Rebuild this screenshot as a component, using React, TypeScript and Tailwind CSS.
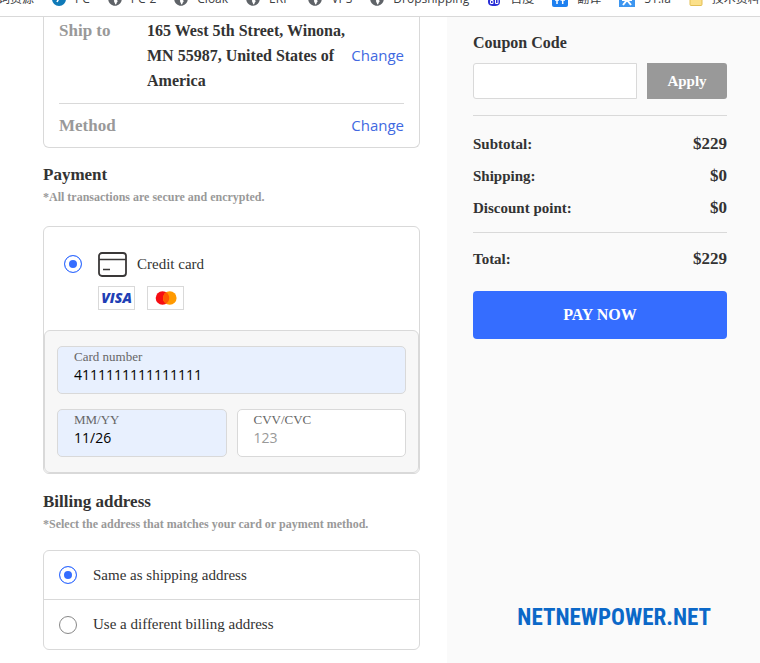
import { useState, type ReactNode } from "react";
import { FaGlobeAmericas } from "react-icons/fa";

const globe = <FaGlobeAmericas className="size-3.5 text-[#5f6368]" />;

const bookmarks: { label: string; icon: ReactNode }[] = [
  {
    label: "PC",
    icon: (
      <svg viewBox="0 0 14 14" className="size-3.5">
        <circle cx="7" cy="7" r="7" fill="#0f7ab8" />
        <path d="M5 10 8.500 3.500" stroke="#fff" strokeWidth="1.500" />
      </svg>
    ),
  },
  { label: "PC-2", icon: globe },
  { label: "Cloak", icon: globe },
  { label: "ERP", icon: globe },
  { label: "VPS", icon: globe },
  { label: "Dropshipping", icon: globe },
  {
    label: "百度",
    icon: (
      <svg viewBox="0 0 14 14" className="size-3.5">
        <path d="M7 3c4 0 6 3 6 6.500S11 14 7 14s-6-1-6-4.500S3 3 7 3z" fill="#2a2fd6" />
        <path d="M3.500 8.500h2.500v3H3.500zM8.500 8v3.500H11V8" stroke="#fff" fill="none" />
      </svg>
    ),
  },
  {
    label: "翻译",
    icon: (
      <svg viewBox="0 0 16 16" className="size-4">
        <rect width="16" height="16" rx="2" fill="#1e80f0" />
        <path d="M3 9h4M5 6v7M8.500 9H13M10.700 6v7" stroke="#fff" strokeWidth="1.500" />
      </svg>
    ),
  },
  {
    label: "51.la",
    icon: (
      <svg viewBox="0 0 16 16" className="size-4">
        <rect width="16" height="16" fill="#3d96f0" />
        <path d="M8 4v5l-4 5M8 9l4 5M3 9h10" stroke="#fff" strokeWidth="2" fill="none" />
      </svg>
    ),
  },
  {
    label: "技术资料",
    icon: (
      <svg viewBox="0 0 14 14" className="size-3.5">
        <rect x="1" y="1" width="12" height="12.500" rx="1" fill="#fbe08a" stroke="#e3bf55" />
      </svg>
    ),
  },
];

function BookmarkBar() {
  return (
    <nav className="flex h-[17px] items-end gap-[18px] overflow-hidden border-b border-[#d9d9d9] bg-white pb-[9px] font-['Open_Sans','Noto_Sans_CJK_SC',sans-serif] text-xs leading-4 text-[#3c4043]">
      <span className="-ml-0.5 shrink-0">词资源</span>
      {bookmarks.map((b) => (
        <a key={b.label} href="#" className="flex shrink-0 items-center gap-[9px] whitespace-nowrap">
          {b.icon}
          {b.label}
        </a>
      ))}
    </nav>
  );
}

type RadioProps = {
  id: string;
  name: string;
  checked: boolean;
  onChange: () => void;
};

function Radio(props: RadioProps) {
  return (
    <input
      type="radio"
      {...props}
      className="size-[18px] shrink-0 appearance-none rounded-full border border-[#888] bg-white checked:border-[#356dff] checked:bg-[#356dff] checked:shadow-[inset_0_0_0_4px_#fff]"
    />
  );
}

type FieldProps = {
  id: string;
  label: string;
  value: string;
  placeholder?: string;
  onChange: (value: string) => void;
};

function Field({ id, label, value, placeholder, onChange }: FieldProps) {
  return (
    <div
      className={`h-12 min-w-0 rounded-[5px] border border-[#d9d9d9] px-4 pt-0.5 ${value ? "bg-[#e8f0fe]" : "bg-white"}`}
    >
      <label htmlFor={id} className="block text-[13px] leading-4 text-[#666]">
        {label}
      </label>
      <input
        id={id}
        value={value}
        placeholder={placeholder}
        onChange={(e) => onChange(e.target.value)}
        className="block h-5 w-full bg-transparent font-['Open_Sans',sans-serif] text-sm text-black outline-none placeholder:text-[#999]"
      />
    </div>
  );
}

function SummaryRow({ label, amount }: { label: string; amount: string }) {
  return (
    <div className="flex h-8 items-center justify-between font-bold">
      <span className="text-[15px]">{label}</span>
      <span className="text-[17px]">{amount}</span>
    </div>
  );
}

export default function App() {
  const [card, setCard] = useState("4111111111111111");
  const [expiry, setExpiry] = useState("11/26");
  const [cvv, setCvv] = useState("");
  const [billing, setBilling] = useState("same");

  return (
    <div className="flex min-h-screen flex-col bg-white font-['Liberation_Serif',serif] text-[#333]">
      <BookmarkBar />
      <div className="grid flex-1 grid-cols-[minmax(0,447fr)_minmax(0,313fr)]">
        <main className="pr-[27px] pb-3 pl-[43px]">
          {/* Shipping details */}
          <section className="rounded-b-md border border-t-0 border-[#d9d9d9] px-[15px] font-bold">
            <div className="flex border-b border-[#d9d9d9] pt-px pb-2.5 text-[17px] leading-[25px]">
              <span className="w-[88px] shrink-0 text-[#999]">Ship to</span>
              <span className="flex-1 text-base leading-[25px]">
                165 West 5th Street, Winona, MN 55987, United States of America
              </span>
              <a
                href="#"
                className="self-center font-['Open_Sans',sans-serif] text-[15px] font-normal text-[#4169e1]"
              >
                Change
              </a>
            </div>
            <div className="flex h-[43px] items-center justify-between text-[17px]">
              <span className="text-[#999]">Method</span>
              <a
                href="#"
                className="font-['Open_Sans',sans-serif] text-[15px] font-normal text-[#4169e1]"
              >
                Change
              </a>
            </div>
          </section>

          {/* Payment */}
          <h2 className="mt-[15px] text-[17px] leading-6 font-bold">Payment</h2>
          <p className="text-xs leading-5 font-bold text-[#999]">
            *All transactions are secure and encrypted.
          </p>
          <section className="mt-[19px] rounded-md border border-[#d9d9d9]">
            <div className="flex gap-4 px-5 pt-[23px] pb-5">
              <div className="flex h-7 items-center">
                <Radio id="credit" name="payment" checked onChange={() => {}} />
              </div>
              <div>
                <label htmlFor="credit" className="flex h-7 items-center gap-2.5 text-[15px]">
                  <svg width="29" height="25" viewBox="0 0 29 25" fill="none" stroke="#3a3838">
                    <rect x="1" y="1" width="27" height="23" rx="3" strokeWidth="1.800" />
                    <path d="M1 7.500h27M5 17.500h7" strokeWidth="1.600" />
                  </svg>
                  Credit card
                </label>
                <div className="mt-2 flex gap-3">
                  <span className="flex h-6 w-[37px] items-center justify-center border border-[#d9d9d9] font-['Open_Sans',sans-serif] text-sm font-extrabold text-[#1f3fb5] italic">
                    VISA
                  </span>
                  <span className="flex h-6 w-[37px] items-center justify-center border border-[#d9d9d9]">
                    <svg width="22" height="14" viewBox="0 0 22 14">
                      <circle cx="7.500" cy="7" r="6.800" fill="#f60d12" />
                      <circle cx="14.800" cy="7" r="6.800" fill="#ff9a00" />
                      <path d="M11.150 1.300a6.800 6.800 0 0 1 0 11.400 6.800 6.800 0 0 1 0-11.400z" fill="#ff5a00" />
                    </svg>
                  </span>
                </div>
              </div>
            </div>
            <div className="flex flex-col gap-[15px] rounded-md border border-[#d9d9d9] bg-[#f7f7f7] px-3 py-[15px]">
              <Field id="card" label="Card number" value={card} onChange={setCard} />
              <div className="grid grid-cols-2 gap-2.5">
                <Field id="expiry" label="MM/YY" value={expiry} onChange={setExpiry} />
                <Field id="cvv" label="CVV/CVC" value={cvv} placeholder="123" onChange={setCvv} />
              </div>
            </div>
          </section>

          {/* Billing address */}
          <h2 className="mt-4 text-[17px] leading-6 font-bold">Billing address</h2>
          <p className="text-xs leading-5 font-bold text-[#999]">
            *Select the address that matches your card or payment method.
          </p>
          <section className="mt-4 rounded-md border border-[#d9d9d9] text-[15px]">
            <label className="flex h-[49px] items-center gap-4 border-b border-[#d9d9d9] px-[15px]">
              <Radio
                id="same"
                name="billing"
                checked={billing === "same"}
                onChange={() => setBilling("same")}
              />
              Same as shipping address
            </label>
            <label className="flex h-[49px] items-center gap-4 px-[15px]">
              <Radio
                id="different"
                name="billing"
                checked={billing === "different"}
                onChange={() => setBilling("different")}
              />
              Use a different billing address
            </label>
          </section>
        </main>

        {/* Order summary */}
        <aside className="flex flex-col bg-[#fafafa] pt-3.5 pr-[33px] pb-[29px] pl-[26px]">
          <label htmlFor="coupon" className="text-base leading-6 font-bold">
            Coupon Code
          </label>
          <div className="mt-2 flex gap-2.5">
            <input
              id="coupon"
              className="h-9 min-w-0 flex-1 rounded-l-[3px] border border-[#d9d9d9] bg-white px-3"
            />
            <button className="h-9 w-20 rounded-r-[3px] bg-[#999] text-[15px] font-bold text-white">
              Apply
            </button>
          </div>
          <div className="mt-4 border-y border-[#d9d9d9] pt-3 pb-2">
            <SummaryRow label="Subtotal:" amount="$229" />
            <SummaryRow label="Shipping:" amount="$0" />
            <SummaryRow label="Discount point:" amount="$0" />
          </div>
          <div className="pt-2.5">
            <SummaryRow label="Total:" amount="$229" />
          </div>
          <button className="mt-4 h-12 rounded bg-[#356dff] text-base font-bold text-white">
            PAY NOW
          </button>
          <p className="mt-auto pr-4 text-right font-['Roboto_Condensed','Roboto',sans-serif] text-[23px] leading-8 font-bold text-[#0b68c8]">
            NETNEWPOWER.NET
          </p>
        </aside>
      </div>
    </div>
  );
}
